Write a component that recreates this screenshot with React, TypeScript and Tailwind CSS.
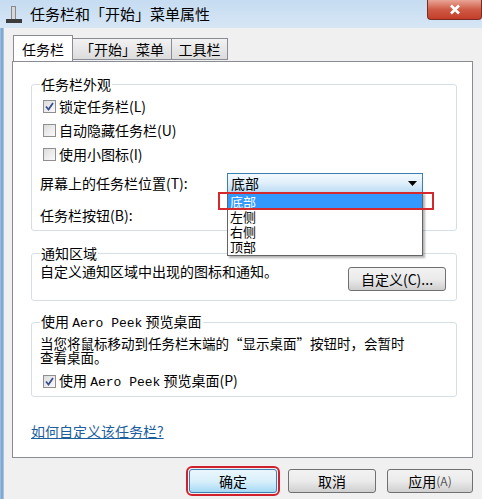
import React from 'react';

function CheckBox({ checked }: { checked?: boolean }) {
  return (
    <span className="flex h-[13px] w-[13px] shrink-0 items-center justify-center border border-[#8e8f8f] bg-gradient-to-br from-[#dcdcdc] to-[#fbfbfb]">
      {checked && (
        <svg width="11" height="11" viewBox="0 0 11 11">
          <path d="M2 5.5 L4.5 8.5 L9 2" fill="none" stroke="#3a4f8f" strokeWidth="1.8" />
        </svg>
      )}
    </span>
  );
}

function WinButton({ children, primary, className = '' }: { children: React.ReactNode; primary?: boolean; className?: string }) {
  return (
    <button
      className={
        'flex h-[24px] items-center justify-center rounded-[3px] border text-[14px] leading-[18px] text-black ' +
        (primary
          ? 'border-[#3c7fb1] bg-gradient-to-b from-[#eaf6fd] via-[#d9f0fc] to-[#a7d9f5] '
          : 'border-[#707070] bg-gradient-to-b from-[#f2f2f2] via-[#ebebeb] to-[#cfcfcf] ') +
        className
      }
    >
      {children}
    </button>
  );
}

export default function App() {
  return (
    <div
      className="flex h-[499px] w-[482px] flex-col overflow-hidden bg-[#f0f0f0] text-black"
      style={{ fontFamily: "'Noto Sans CJK SC', 'Noto Sans', sans-serif" }}
    >
      {/* Title bar */}
      <div className="relative flex h-[28px] shrink-0 items-center bg-gradient-to-b from-[#c6dcf1] to-[#d6e6f5] pl-[5px]">
        <svg width="18" height="20" viewBox="0 0 18 20" className="mt-[2px]">
          <rect x="6" y="1" width="5" height="14" fill="#8a8a8a" />
          <rect x="7" y="2" width="3" height="12" fill="#d8d8d8" />
          <rect x="1" y="14" width="16" height="4" fill="#3c3c3c" />
        </svg>
        <span className="ml-[7px] text-[15px] leading-[20px]">任务栏和「开始」菜单属性</span>
        <div className="absolute right-0 top-0 flex h-[20px] w-[55px] items-center justify-center rounded-b-[4px] border border-t-0 border-[#7a2b23] bg-gradient-to-b from-[#e8a496] via-[#cf5a45] to-[#c33e28]">
          <svg width="12" height="11" viewBox="0 0 12 11">
            <path d="M2 1.5 L10 9.5 M10 1.5 L2 9.5" stroke="#ffffff" strokeWidth="2.6" />
          </svg>
        </div>
      </div>

      <div className="flex flex-1">
        {/* left window frame */}
        <div className="w-[4px] bg-gradient-to-r from-[#aac6e2] via-[#6f9ccb] to-[#b8cfe6]" />

        <div className="flex flex-1 flex-col pl-[8px] pr-[9px] pt-[8px]">
          {/* Tabs */}
          <div className="relative z-10 flex h-[25px] items-end pl-[1px]">
            <div className="flex h-[26px] w-[60px] items-center justify-center border border-b-0 border-[#898c95] bg-white text-[14px] leading-[18px]">
              任务栏
            </div>
            <div className="mb-[1px] flex h-[22px] w-[99px] items-center justify-center border border-l-0 border-[#898c95] bg-gradient-to-b from-[#f2f2f2] to-[#dcdcdc] text-[14px] leading-[18px]">
              「开始」菜单
            </div>
            <div className="mb-[1px] flex h-[22px] w-[56px] items-center justify-center border border-l-0 border-[#898c95] bg-gradient-to-b from-[#f2f2f2] to-[#dcdcdc] text-[14px] leading-[18px]">
              工具栏
            </div>
          </div>

          {/* Panel */}
          <div className="flex h-[397px] flex-col border border-[#898c95] bg-white pl-[18px] pr-[15px] pt-[13px]">
            {/* Group 1 */}
            <fieldset className="rounded-[3px] border border-[#d5dfe5] pl-[8px] pr-[8px]">
              <legend className="px-[1px] text-[14px] leading-[18px]">任务栏外观</legend>
              <div className="pt-[1px] text-[14px] leading-[18px]">
                <div className="flex h-[24px] items-center pl-[3px]">
                  <CheckBox checked />
                  <span className="ml-[3px]">锁定任务栏(L)</span>
                </div>
                <div className="flex h-[24px] items-center pl-[3px]">
                  <CheckBox />
                  <span className="ml-[3px]">自动隐藏任务栏(U)</span>
                </div>
                <div className="flex h-[24px] items-center pl-[3px]">
                  <CheckBox />
                  <span className="ml-[3px]">使用小图标(I)</span>
                </div>
                <div className="flex h-[34px] items-center">
                  <span className="w-[187px]">屏幕上的任务栏位置(T):</span>
                  <div className="relative">
                    <div className="flex h-[20px] w-[196px] items-center justify-between border border-[#3c7fb1] bg-gradient-to-b from-[#f4faff] via-[#e0effb] to-[#bcdcf4] pl-[3px] pr-[5px]">
                      <span>底部</span>
                      <svg width="9" height="5" viewBox="0 0 9 5">
                        <path d="M0 0 H9 L4.5 5 Z" fill="#000" />
                      </svg>
                    </div>
                    {/* dropdown list */}
                    <div className="absolute left-0 top-[19px] z-20 w-[196px] border border-[#646464] bg-white py-px text-[13px] shadow-[2px_2px_2px_rgba(0,0,0,0.3)]">
                      <div className="h-[15px] bg-[#3399ff] pl-[2px] leading-[15px] text-white">底部</div>
                      <div className="h-[15px] pl-[2px] leading-[15px]">左侧</div>
                      <div className="h-[15px] pl-[2px] leading-[15px]">右侧</div>
                      <div className="h-[15px] pl-[2px] leading-[15px]">顶部</div>
                    </div>
                    <div className="absolute left-[-9px] top-[19px] z-30 h-[18px] w-[216px] border-2 border-[#d42a2e]" />
                  </div>
                </div>
                <div className="flex h-[30px] items-center">
                  <span>任务栏按钮(B):</span>
                </div>
              </div>
            </fieldset>

            {/* Group 2 */}
            <fieldset className="mt-[13px] rounded-[3px] border border-[#d5dfe5] pb-[9px] pl-[8px] pr-[10px]">
              <legend className="px-[1px] text-[14px] leading-[18px]">通知区域</legend>
              <div className="flex items-start justify-between text-[14px] leading-[18px]">
                <span>自定义通知区域中出现的图标和通知。</span>
                <WinButton className="mt-[5px] h-[22px] w-[98px]">自定义(C)...</WinButton>
              </div>
            </fieldset>

            {/* Group 3 */}
            <fieldset className="mt-[11px] rounded-[3px] border border-[#d5dfe5] pb-[5px] pl-[8px] pr-[8px]">
              <legend className="px-[1px] text-[14px] leading-[18px]">
                使用 <span className="font-['Liberation_Mono'] text-[13px]">Aero Peek</span> 预览桌面
              </legend>
              <div className="mt-[3px] text-[13.5px] leading-[14px]">
                <div>当您将鼠标移动到任务栏末端的“显示桌面”按钮时，会暂时</div>
                <div>查看桌面。</div>
              </div>
              <div className="mt-[7px] flex h-[20px] items-center pl-[3px] text-[14px] leading-[18px]">
                <CheckBox checked />
                <span className="ml-[3px]">
                  使用 <span className="font-['Liberation_Mono'] text-[13px]">Aero Peek</span> 预览桌面(P)
                </span>
              </div>
            </fieldset>

            <div className="mt-[25px] text-[14px] leading-[18px]">
              <a className="text-[#1c5e9e] underline">如何自定义该任务栏?</a>
            </div>
          </div>

          {/* Bottom buttons */}
          <div className="mt-[11px] flex justify-end gap-[11px]">
            <WinButton primary className="w-[88px] outline-2 outline-offset-[1px] outline-[#d0202e]">
              确定
            </WinButton>
            <WinButton className="w-[88px]">取消</WinButton>
            <WinButton className="w-[86px]">
              应用<span className="text-[12px] text-[#555]">(A)</span>
            </WinButton>
          </div>
        </div>
      </div>
    </div>
  );
}
